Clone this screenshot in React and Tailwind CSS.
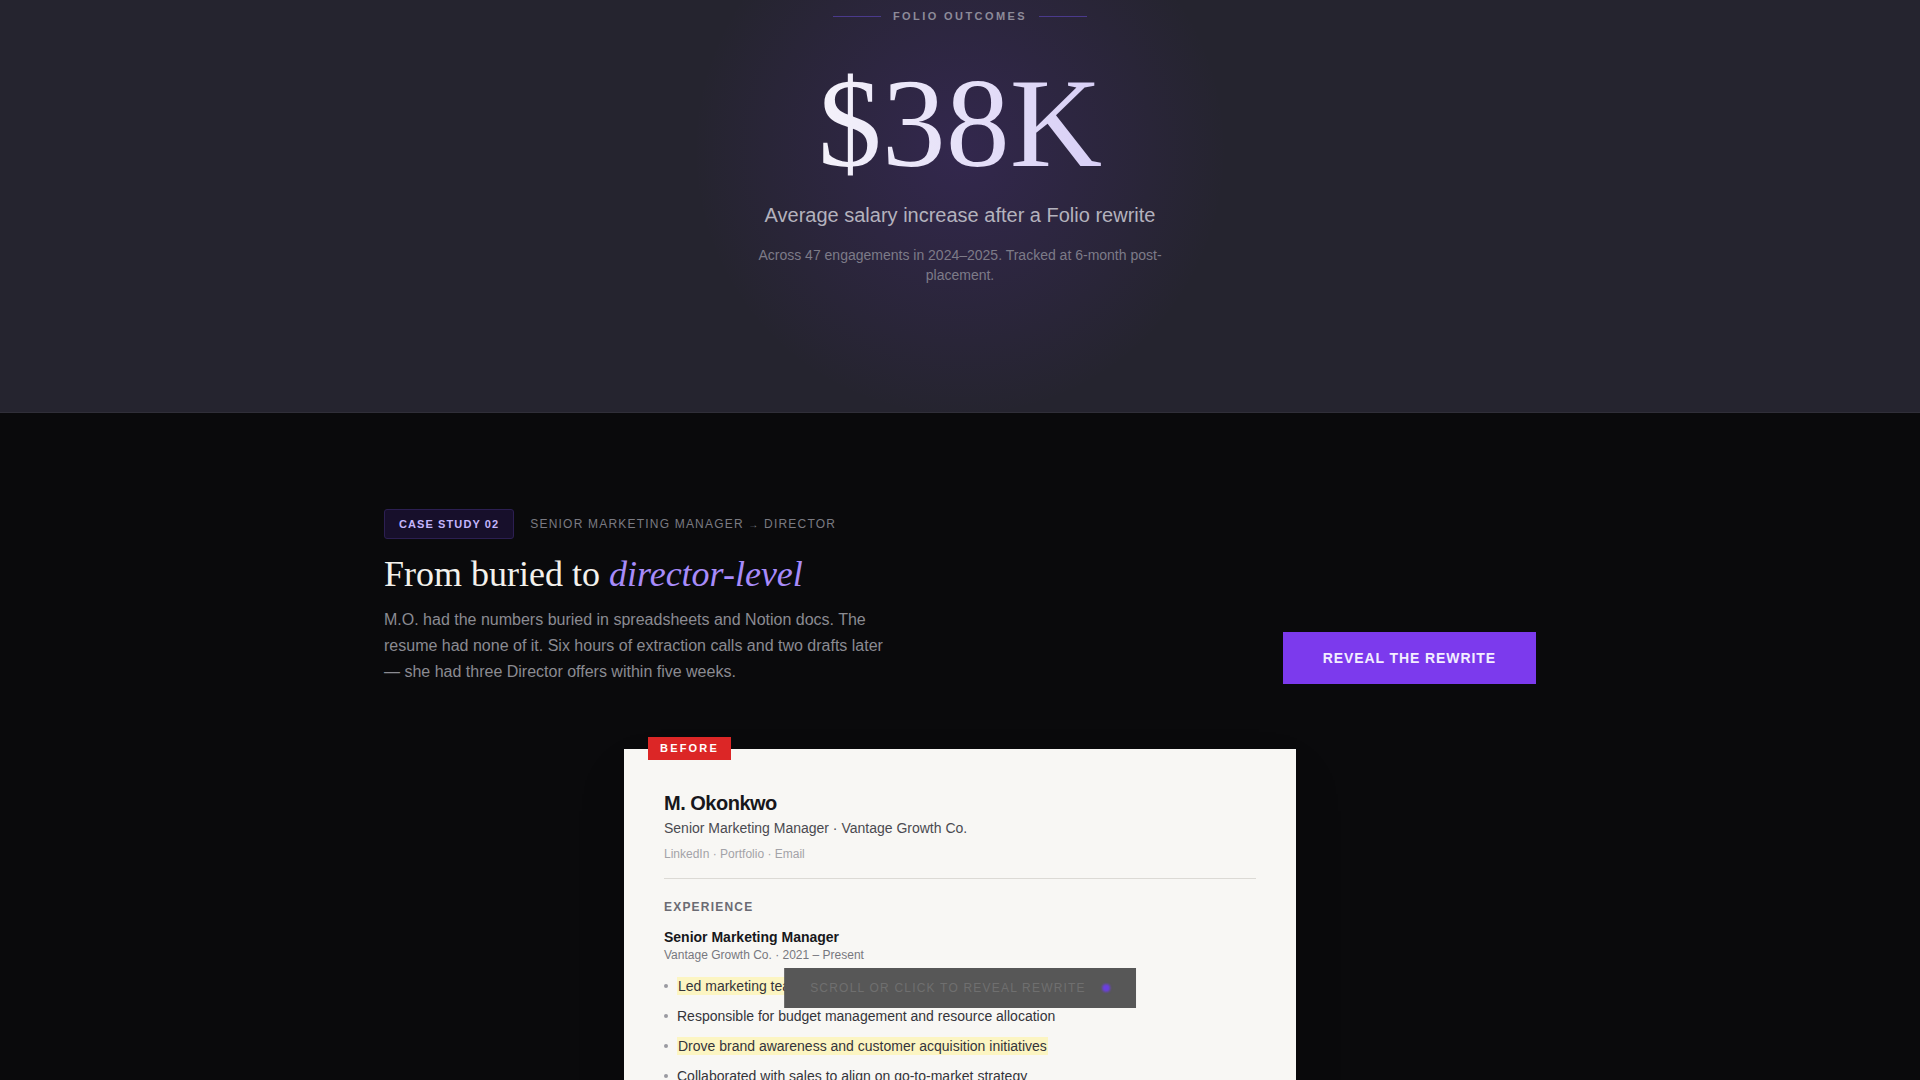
import React from 'react'

const bullets = [
  { text: 'Led marketing team and managed campaigns across all channels', hl: true },
  { text: 'Responsible for budget management and resource allocation', hl: false },
  { text: 'Drove brand awareness and customer acquisition initiatives', hl: true },
  { text: 'Collaborated with sales to align on go-to-market strategy', hl: false },
  { text: 'Worked on reporting and analytics for leadership reviews', hl: true },
]

export default function App() {
  return (
    <div className="min-h-screen w-full bg-[#0a0a0c] font-['Liberation_Sans',Arial,sans-serif]">
      {/* outcomes */}
      <section className="relative overflow-hidden border-b border-white/[0.05] bg-[#25242f] px-4 pt-2 pb-[127px]">
        <div className="pointer-events-none absolute left-1/2 top-[-120px] h-[540px] w-[540px] -translate-x-1/2 rounded-full bg-[radial-gradient(circle,rgba(124,58,237,0.16)_0%,rgba(124,58,237,0.06)_45%,transparent_70%)]" />
        <div className="relative mx-auto flex max-w-3xl flex-col items-center text-center">
          <div className="flex items-center gap-3">
            <span className="h-px w-12 bg-[#4a3a8c]" />
            <span className="text-[11px] font-semibold leading-4 tracking-[0.22em] text-[#8d8b99]">
              FOLIO OUTCOMES
            </span>
            <span className="h-px w-12 bg-[#4a3a8c]" />
          </div>

          <div className="mt-[35px] bg-gradient-to-r from-[#f4f2fa] to-[#d8cff6] bg-clip-text font-['Liberation_Serif','Times_New_Roman',serif] text-9xl text-transparent">
            $38K
          </div>

          <p className="mt-3.5 text-xl text-[#b4b2bd]">
            Average salary increase after a Folio rewrite
          </p>
          <p className="mt-4 max-w-md text-sm leading-5 text-[#7d7b88]">
            Across 47 engagements in 2024–2025. Tracked at 6-month post-placement.
          </p>
        </div>
      </section>

      {/* case study */}
      <section className="px-4 pt-24 pb-40">
        <div className="mx-auto flex max-w-6xl items-end justify-between">
          <div>
            <div className="flex items-center gap-4">
              <span className="rounded-[3px] border border-[#2c1f52] bg-[#170f2b] px-[14px] py-1.5 text-[11px] font-bold leading-4 tracking-[0.1em] text-[#c4b5fd]">
                CASE STUDY 02
              </span>
              <span className="text-xs tracking-[0.1em] text-[#7a7a82]">
                SENIOR MARKETING MANAGER <span className="text-[10px]">→</span> DIRECTOR
              </span>
            </div>
            <h2 className="mt-4 font-['Liberation_Serif','Times_New_Roman',serif] text-4xl leading-[1.1] text-[#f3f1ec]">
              From buried to <em className="text-[#a78bfa]">director-level</em>
            </h2>
            <p className="mt-3 max-w-lg text-base leading-[26px] text-[#8b8b92]">
              M.O. had the numbers buried in spreadsheets and Notion docs. The resume had none of it. Six hours of extraction calls and two drafts later — she had three Director offers within five weeks.
            </p>
          </div>
          <button className="mb-px bg-[#7c3aed] px-10 py-4 text-sm font-bold leading-5 tracking-[0.065em] text-[#f3eeff] hover:bg-[#6d28d9]">
            REVEAL THE REWRITE
          </button>
        </div>

        <div className="relative mx-auto mt-16 max-w-2xl bg-[#f8f7f4] p-10 shadow-2xl">
          <span className="absolute -top-3 left-6 bg-[#dc2626] px-3 py-1 text-[11px] font-bold leading-[15px] tracking-[0.2em] text-white">
            BEFORE
          </span>

          <div className="border-b border-[#dcdad5] pb-4">
            <h3 className="text-xl font-bold leading-7 tracking-tight text-[#17171b]">M. Okonkwo</h3>
            <p className="mt-px text-sm leading-5 text-[#4a4a50]">Senior Marketing Manager · Vantage Growth Co.</p>
            <p className="mt-2 text-xs leading-4 text-[#a3a3a8]">LinkedIn · Portfolio · Email</p>
          </div>

          <div className="mt-5">
            <h4 className="text-xs font-bold leading-4 tracking-[0.1em] text-[#6b6b73]">EXPERIENCE</h4>
            <div className="mt-3">
              <p className="text-sm font-bold leading-5 text-[#17171b]">Senior Marketing Manager</p>
              <p className="text-xs leading-4 text-[#77777e]">Vantage Growth Co. · 2021 – Present</p>
              <ul className="mt-3 flex flex-col gap-2">
                {bullets.map((b) => (
                  <li key={b.text} className="flex items-center gap-[9px] text-sm leading-[22px] text-[#34343a]">
                    <span className="h-1 w-1 shrink-0 rounded-full bg-[#9a9aa0]" />
                    <span>
                      <span className={b.hl ? 'bg-[#fcf5c2] px-px py-px' : ''}>{b.text}</span>
                    </span>
                  </li>
                ))}
              </ul>
            </div>

            <div className="mt-5">
              <p className="text-sm font-bold leading-5 text-[#17171b]">Marketing Manager</p>
              <p className="text-xs leading-4 text-[#77777e]">Brightline Media · 2017 – 2021</p>
              <ul className="mt-3 flex flex-col gap-2">
                <li className="flex items-center gap-[9px] text-sm leading-[22px] text-[#34343a]">
                  <span className="h-1 w-1 shrink-0 rounded-full bg-[#9a9aa0]" />
                  <span>Managed social media and email marketing programs</span>
                </li>
              </ul>
            </div>
          </div>
        </div>
      </section>

      {/* toast */}
      <div className="fixed bottom-[72px] left-1/2 flex -translate-x-1/2 items-center gap-4 bg-[#575757] px-[26px] py-3">
        <span className="text-xs leading-4 tracking-[0.1em] text-[#6f6f6f]">
          SCROLL OR CLICK TO REVEAL REWRITE
        </span>
        <span className="h-2 w-2 rounded-full bg-[#6b3fe0] blur-[1px]" />
      </div>
    </div>
  )
}
